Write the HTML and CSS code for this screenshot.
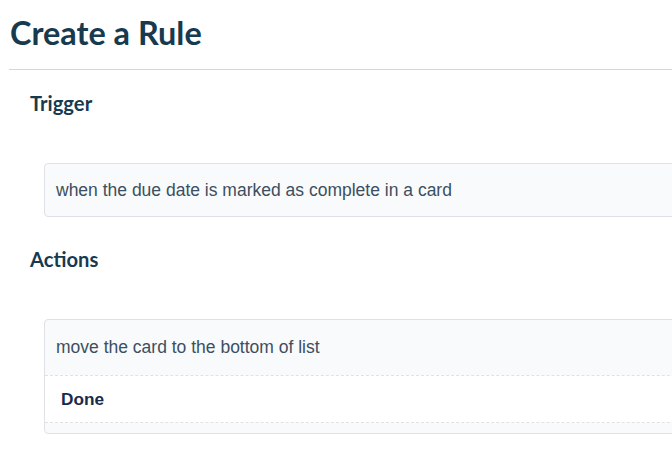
FILE: index.html
```html
<!DOCTYPE html>
<html>
<head>
<meta charset="utf-8">
<link rel="stylesheet" href="styles.css">
</head>
<body>
<div class="page">
  <h1 class="title">Create a Rule</h1>
  <section class="section">
    <h2 class="section-title">Trigger</h2>
    <div class="card">
      <div class="card-row">when the due date is marked as complete in a card</div>
    </div>
  </section>
  <section class="section">
    <h2 class="section-title">Actions</h2>
    <div class="card">
      <div class="card-row">move the card to the bottom of list</div>
      <div class="done-row">Done</div>
      <div class="card-foot"></div>
    </div>
  </section>
</div>
</body>
</html>
```

FILE: styles.css
```css
html, body {
  margin: 0;
  padding: 0;
  background: #ffffff;
  overflow: hidden;
}
.page {
  padding: 14px 0 0 9px;
}
.title {
  margin: 0;
  padding: 0 0 17px 1px;
  font-family: Lato, "Liberation Sans", sans-serif;
  font-weight: 700;
  font-size: 32.4px;
  line-height: 38px;
  color: #173a4f;
  border-bottom: 1px solid #d6d6d6;
}
.section {
  padding-left: 21px;
}
.section-title {
  margin: 0;
  font-family: Lato, "Liberation Sans", sans-serif;
  font-weight: 700;
  font-size: 20.2px;
  line-height: 24px;
  color: #173a4f;
}
.section:first-of-type .section-title {
  margin-top: 21px;
}
.section + .section .section-title {
  margin-top: 30px;
}
.card {
  margin: 48px 0 0 14px;
  width: 700px;
  border: 1px solid #dfe1e6;
  border-radius: 4px;
  background: #f9fafc;
  font-family: "Liberation Sans", Arial, sans-serif;
  font-size: 17.5px;
  line-height: 20px;
}
.card-row {
  padding: 16px 11px;
  color: #3c4f60;
}
.section + .section .card-row {
  padding: 17px 11px 18px;
}
.done-row {
  padding: 13px 16px;
  background: #ffffff;
  border-top: 1px dashed #dfe1e6;
  border-bottom: 1px dashed #dfe1e6;
  font-weight: 700;
  font-size: 17.2px;
  color: #172b4d;
}
.card-foot {
  height: 10px;
}
```
